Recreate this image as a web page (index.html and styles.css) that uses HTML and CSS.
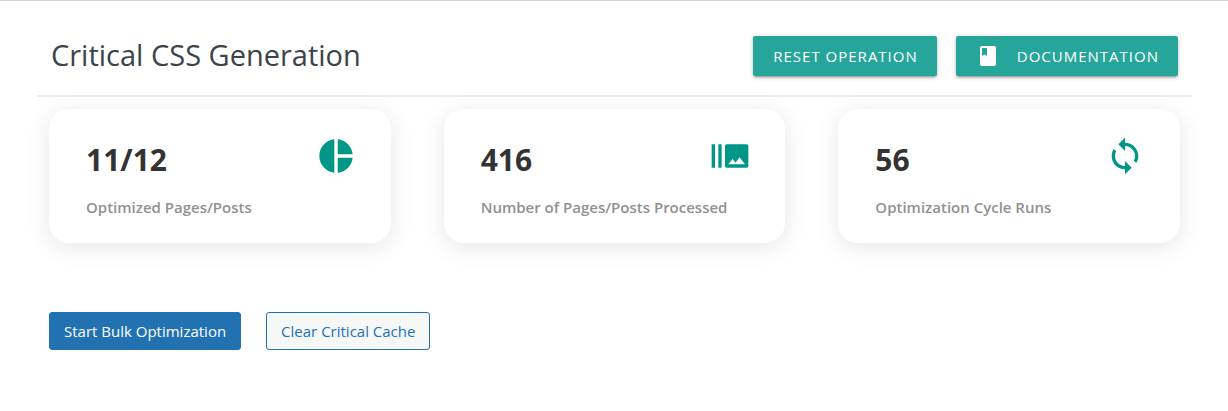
FILE: index.html
```html
<!DOCTYPE html>
<html lang="en">
<head>
    <meta charset="UTF-8">
    <meta name="viewport" content="width=device-width, initial-scale=1.0">
    <title>Critical CSS Generation</title>
    <link rel="stylesheet" href="styles.css">
</head>
<body>

    <main class="page">
        <!-- Header -->
        <header class="page-header">
            <h1>Critical CSS Generation</h1>
            <div class="header-actions">
                <button type="button" class="btn">Reset Operation</button>
                <a href="#documentation" class="btn btn-docs">
                    <svg viewBox="0 0 24 24" aria-hidden="true"><path d="M18 2H6c-1.100 0-2 .9-2 2v16c0 1.100.9 2 2 2h12c1.100 0 2-.9 2-2V4c0-1.100-.9-2-2-2zM6 4h5v8l-2.500-1.500L6 12V4z"/></svg>
                    Documentation
                </a>
            </div>
        </header>

        <!-- Stats -->
        <section class="cards">
            <div class="card">
                <div class="card-text">
                    <h2>11/12</h2>
                    <p>Optimized Pages/Posts</p>
                </div>
                <svg class="card-icon" viewBox="0 0 24 24" aria-hidden="true"><path d="M11 2v20c-5.070-.5-9-4.790-9-10s3.930-9.500 9-10zm2.030 0v8.990H22c-.47-4.740-4.240-8.520-8.970-8.990zm0 11.010V22c4.740-.47 8.500-4.250 8.970-8.990h-8.970z"/></svg>
            </div>
            <div class="card">
                <div class="card-text">
                    <h2>416</h2>
                    <p>Number of Pages/Posts Processed</p>
                </div>
                <svg class="card-icon" viewBox="0 0 24 24" aria-hidden="true"><path d="M1 5h2v14H1zm4 0h2v14H5zm17 0H10c-.55 0-1 .45-1 1v12c0 .55.45 1 1 1h12c.55 0 1-.45 1-1V6c0-.55-.45-1-1-1zM11 17l2.500-3.150L15.290 16l2.500-3.220L21 17H11z"/></svg>
            </div>
            <div class="card">
                <div class="card-text">
                    <h2>56</h2>
                    <p>Optimization Cycle Runs</p>
                </div>
                <svg class="card-icon" viewBox="0 0 24 24" aria-hidden="true"><path d="M12 4V1L8 5l4 4V6c3.310 0 6 2.690 6 6 0 1.010-.25 1.970-.7 2.800l1.460 1.460C19.540 15.030 20 13.570 20 12c0-4.420-3.580-8-8-8zm0 14c-3.310 0-6-2.690-6-6 0-1.010.25-1.970.7-2.800L5.240 7.740C4.460 8.970 4 10.430 4 12c0 4.420 3.580 8 8 8v3l4-4-4-4v3z"/></svg>
            </div>
        </section>

        <!-- Actions -->
        <div class="actions">
            <button type="button" class="button button-primary">Start Bulk Optimization</button>
            <button type="button" class="button">Clear Critical Cache</button>
        </div>
    </main>

</body>
</html>
```
FILE: styles.css
```css
:root {
    --teal: #26a69a;
    --teal-dark: #009688;
    --blue: #2271b1;
}

* {
    margin: 0;
    padding: 0;
    box-sizing: border-box;
}

body {
    background: #fff;
    color: #3c434a;
    font-family: "Segoe UI", "Open Sans", "Noto Sans", sans-serif;
    font-size: 15px;
    border-top: 1px solid #d5d5d5;
}

.page {
    padding: 16px 36px 60px 37px;
}

/* Header */
.page-header {
    display: flex;
    justify-content: space-between;
    align-items: flex-start;
    padding: 19px 14px;
    border-bottom: 2px solid #ececec;
}

.page-header h1 {
    font-size: 29px;
    font-weight: 400;
    line-height: 38px;
}

.header-actions {
    display: flex;
    gap: 19px;
}

.btn {
    display: flex;
    align-items: center;
    height: 40px;
    padding: 0 19px 0 20px;
    border: none;
    border-radius: 2px;
    background: var(--teal);
    color: #fff;
    font-family: inherit;
    font-size: 15px;
    line-height: 40px;
    letter-spacing: 1px;
    text-transform: uppercase;
    text-decoration: none;
    cursor: pointer;
    box-shadow: 0 2px 2px 0 rgba(0, 0, 0, 0.14), 0 3px 1px -2px rgba(0, 0, 0, 0.12), 0 1px 5px 0 rgba(0, 0, 0, 0.2);
}

.btn-docs svg {
    width: 24px;
    height: 24px;
    margin-right: 17px;
    fill: currentColor;
}

/* Stats */
.cards {
    display: grid;
    grid-template-columns: repeat(3, minmax(0, 1fr));
    gap: 53px;
    padding: 12px 12px 0;
}

.card {
    display: flex;
    justify-content: space-between;
    align-items: flex-start;
    padding: 27px 35px 24px 37px;
    border-radius: 20px;
    background: #fff;
    box-shadow: 0 4px 25px rgba(0, 0, 0, 0.1);
}

.card-text {
    min-width: 0;
}

.card h2 {
    color: #333;
    font-size: 30px;
    font-weight: 700;
    line-height: 48px;
}

.card p {
    margin-top: 12px;
    color: #919191;
    font-size: 15px;
    font-weight: 600;
    line-height: 23px;
    white-space: nowrap;
}

.card-icon {
    flex: none;
    width: 40px;
    height: 40px;
    fill: var(--teal-dark);
}

/* Actions */
.actions {
    display: flex;
    gap: 25px;
    padding: 69px 12px 0;
}

.button {
    height: 38px;
    padding: 0 14px;
    border: 1px solid var(--blue);
    border-radius: 3px;
    background: #f6f7f7;
    color: var(--blue);
    font-family: inherit;
    font-size: 15px;
    cursor: pointer;
}

.button-primary {
    background: var(--blue);
    color: #fff;
}
```
